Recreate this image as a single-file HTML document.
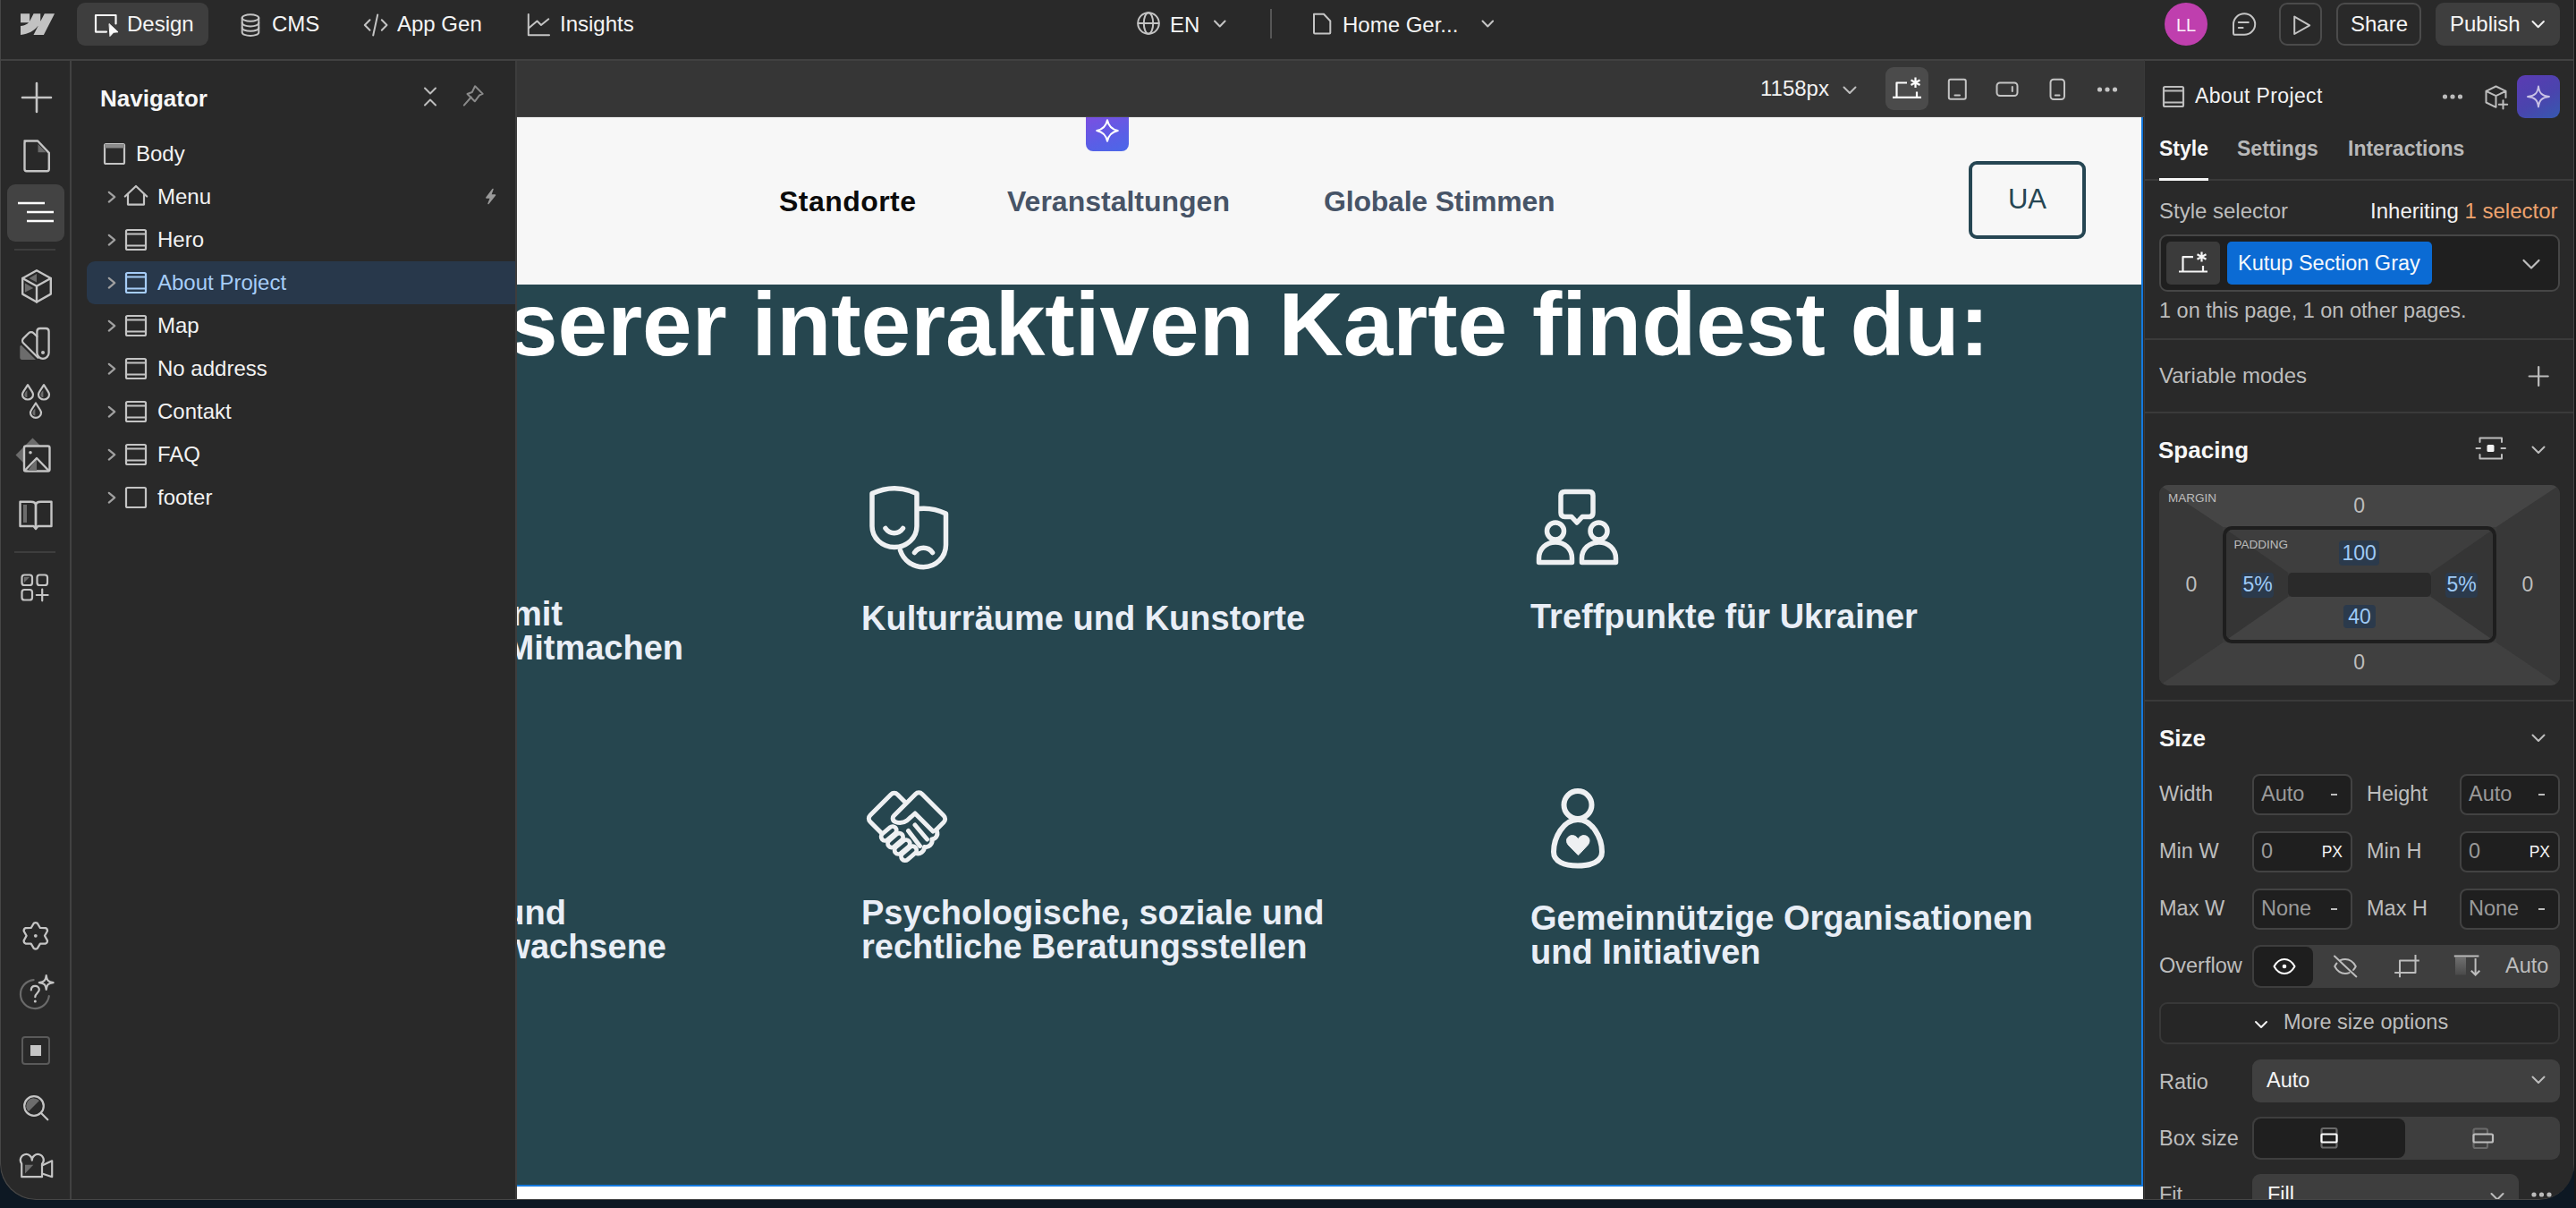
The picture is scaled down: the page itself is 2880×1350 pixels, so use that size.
<!DOCTYPE html>
<html><head><meta charset="utf-8"><style>
html,body{margin:0;padding:0;}
body{width:2880px;height:1350px;overflow:hidden;position:relative;background:#0d1823;font-family:"Liberation Sans", sans-serif;}
.win{position:absolute;left:0;top:0;width:2878px;height:1341px;background:#292929;border-radius:0 0 40px 40px;overflow:hidden;}
.t{position:absolute;white-space:nowrap;line-height:1;}
.r{position:absolute;}
.i{position:absolute;overflow:visible;}
</style></head><body>
<div class="r" style="left:2878px;top:0;width:2px;height:1341px;background:#161616"></div>
<div class="win">
<div class="r" style="left:0px;top:0px;width:2880px;height:66px;background:#292929;"></div><div class="r" style="left:0px;top:66px;width:2880px;height:2px;background:#414141;"></div><svg class="i" style="left:23px;top:15px" width="38" height="24" viewBox="0 0 173 108"><path fill="#c2c2c2" d="M173.2 0L117.9 108.1H66L89.1 63.3H88.1C69 88.1 40.5 104.4 0 108.1V63.9C0 63.9 25.9 62.4 41.2 46.4H0V0H46.3V38.1H47.3L66.2 0H101.2V37.9H102.3L121.9 0H173.2Z"/></svg><div class="r" style="left:86px;top:3px;width:147px;height:48px;background:#3e3e3e;border-radius:9px;"></div><svg class="i" style="left:100px;top:10px;" width="40" height="36" viewBox="100 10 40 36" fill="none" stroke="#f5f5f5" stroke-width="2.2" stroke-linecap="round" stroke-linejoin="round"><path d="M119 35.6H107V17H129.5V26.5"/><path d="M122.3 26.8L132 35.8L127 36.2L123.2 40.3Z" fill="#fafafa" stroke="#fafafa" stroke-width="1"/></svg><div class="t" style="left:142.0px;top:14.7px;font-size:24px;color:#f5f5f5;font-weight:400;">Design</div><svg class="i" style="left:266px;top:12px;" width="28" height="32" viewBox="266 12 28 32" fill="none" stroke="#c4c4c4" stroke-width="2" stroke-linecap="round" stroke-linejoin="round"><ellipse cx="280" cy="20" rx="9.3" ry="3.8"/><path d="M270.7 20V36.2C270.7 38.4 275 40 280 40C285 40 289.3 38.4 289.3 36.2V20"/><path d="M270.7 25.6C270.7 27.8 275 29.4 280 29.4C285 29.4 289.3 27.8 289.3 25.6"/><path d="M270.7 31C270.7 33.2 275 34.8 280 34.8C285 34.8 289.3 33.2 289.3 31"/></svg><div class="t" style="left:304.0px;top:14.7px;font-size:24px;color:#f5f5f5;font-weight:400;">CMS</div><svg class="i" style="left:402px;top:12px;" width="36" height="32" viewBox="402 12 36 32" fill="none" stroke="#c4c4c4" stroke-width="2" stroke-linecap="round" stroke-linejoin="round"><path d="M413.5 22.2L407.8 28L413.5 33.8"/><path d="M422.2 16.5L417.2 39.5"/><path d="M426.8 22.2L432.5 28L426.8 33.8"/></svg><div class="t" style="left:444.0px;top:14.7px;font-size:24px;color:#f5f5f5;font-weight:400;">App Gen</div><svg class="i" style="left:586px;top:12px;" width="32" height="32" viewBox="586 12 32 32" fill="none" stroke="#c4c4c4" stroke-width="2" stroke-linecap="round" stroke-linejoin="round"><path d="M590.8 16V39.3H614"/><path d="M591 31.5L600.5 23.5L605 28L613.3 21.3"/></svg><div class="t" style="left:626.0px;top:14.7px;font-size:24px;color:#f5f5f5;font-weight:400;">Insights</div><svg class="i" style="left:1268px;top:10px;" width="32" height="32" viewBox="1268 10 32 32" fill="none" stroke="#c4c4c4" stroke-width="2" stroke-linecap="round" stroke-linejoin="round"><circle cx="1284" cy="26" r="11.8"/><ellipse cx="1284" cy="26" rx="5.2" ry="11.8"/><path d="M1272.5 26H1295.5"/></svg><div class="t" style="left:1308.0px;top:15.7px;font-size:24px;color:#f5f5f5;font-weight:400;">EN</div><svg class="i" style="left:1354px;top:20px;" width="20" height="14" viewBox="1354 20 20 14" fill="none" stroke="#c4c4c4" stroke-width="2" stroke-linecap="round" stroke-linejoin="round"><path d="M1358 23.5L1363.8 29.5L1369.6 23.5"/></svg><div class="r" style="left:1420px;top:10px;width:2px;height:33px;background:#565656;"></div><svg class="i" style="left:1464px;top:10px;" width="28" height="32" viewBox="1464 10 28 32" fill="none" stroke="#c4c4c4" stroke-width="2" stroke-linecap="round" stroke-linejoin="round"><path d="M1469 15.8H1480L1487.3 23.5V36.6C1487.3 37.2 1486.8 37.6 1486.3 37.6H1470C1469.4 37.6 1469 37.2 1469 36.6Z"/></svg><div class="t" style="left:1501.0px;top:15.7px;font-size:24px;color:#f5f5f5;font-weight:400;">Home Ger...</div><svg class="i" style="left:1654px;top:20px;" width="20" height="14" viewBox="1654 20 20 14" fill="none" stroke="#c4c4c4" stroke-width="2" stroke-linecap="round" stroke-linejoin="round"><path d="M1657.5 23.5L1663.3 29.5L1669.1 23.5"/></svg><div class="r" style="left:2420px;top:3px;width:48px;height:48px;border-radius:50%;background:#bf3fae"></div><div class="t" style="left:1944.0px;width:1000px;text-align:center;top:17.6px;font-size:20px;color:#fbeffa;font-weight:400;letter-spacing:0px;">LL</div><svg class="i" style="left:2492px;top:10px;" width="34" height="34" viewBox="2492 10 34 34" fill="none" stroke="#c4c4c4" stroke-width="2" stroke-linecap="round" stroke-linejoin="round"><path d="M2509.2 15.2C2515.8 15.2 2521.2 20.5 2521.2 27C2521.2 33.5 2515.8 38.8 2509.2 38.8H2498.9C2497.8 38.8 2497 38 2497 36.9V27C2497 20.5 2502.5 15.2 2509.2 15.2Z"/><path d="M2502.8 25H2513.8M2502.8 31.1H2507.6"/></svg><div class="r" style="left:2548px;top:3px;width:48px;height:48px;background:transparent;border:2px solid #4b4b4b;border-radius:9px;box-sizing:border-box;"></div><svg class="i" style="left:2560px;top:14px;" width="28" height="28" viewBox="2560 14 28 28" fill="none" stroke="#c4c4c4" stroke-width="2" stroke-linecap="round" stroke-linejoin="round"><path d="M2565.2 18.6V38L2582.2 28.3Z"/></svg><div class="r" style="left:2612px;top:3px;width:95px;height:48px;background:transparent;border:2px solid #4b4b4b;border-radius:9px;box-sizing:border-box;"></div><div class="t" style="left:2628.0px;top:14.7px;font-size:24px;color:#f5f5f5;font-weight:400;">Share</div><div class="r" style="left:2723px;top:3px;width:139px;height:48px;background:#3e3e3e;border-radius:9px;"></div><div class="t" style="left:2739.0px;top:14.7px;font-size:24px;color:#f5f5f5;font-weight:400;">Publish</div><svg class="i" style="left:2828px;top:20px;" width="20" height="14" viewBox="2828 20 20 14" fill="none" stroke="#f0f0f0" stroke-width="2" stroke-linecap="round" stroke-linejoin="round"><path d="M2831.5 24L2837.7 30.3L2843.9 24"/></svg>
<div class="r" style="left:78px;top:68px;width:2px;height:1272px;background:#414141;"></div><svg class="i" style="left:20px;top:88px;" width="42" height="42" viewBox="20 88 42 42" fill="none" stroke="#c4c4c4" stroke-width="2.6" stroke-linecap="round" stroke-linejoin="round"><path d="M41 93V125M25 109H57"/></svg><svg class="i" style="left:20px;top:150px;" width="42" height="48" viewBox="20 150 42 48" fill="none" stroke="#c4c4c4" stroke-width="2.4" stroke-linecap="round" stroke-linejoin="round"><path d="M27.5 157.5H42.2L54.8 170.8V189C54.8 190.2 53.9 191.2 52.6 191.2H29.7C28.5 191.2 27.5 190.2 27.5 189V159.7C27.5 158.5 28.5 157.5 29.7 157.5Z"/><path d="M42.5 161L51.5 170.3H42.5Z" fill="#6a6a6a" stroke="none"/></svg><div class="r" style="left:8px;top:206px;width:64px;height:64px;background:#434343;border-radius:9px;"></div><svg class="i" style="left:14px;top:216px;stroke-linecap:butt" width="52" height="40" viewBox="14 216 52 40" fill="none" stroke="#ffffff" stroke-width="2.6" stroke-linecap="round" stroke-linejoin="round"><path d="M20 227H50M30 237H60M30 247H60"/></svg><div class="r" style="left:16px;top:278px;width:46px;height:2px;background:#3d3d3d;"></div><svg class="i" style="left:18px;top:296px;" width="46" height="48" viewBox="18 296 46 48" fill="none" stroke="#c4c4c4" stroke-width="2.4" stroke-linecap="round" stroke-linejoin="round"><path d="M32.5 310.9L41 306V315.6Z" fill="#6c6c6c" stroke="none"/><path d="M28 316.5L37.3 322L28 326.5Z" fill="#6c6c6c" stroke="none"/><path d="M41 302.2L56.8 311V328.6L41 337.5L25.2 328.6V311Z"/><path d="M25.2 311L41 319.8L56.8 311M41 319.8V337.5"/></svg><svg class="i" style="left:16px;top:360px;" width="46" height="48" viewBox="16 360 46 48" fill="none" stroke="#c4c4c4" stroke-width="2.3" stroke-linecap="round" stroke-linejoin="round"><path d="M22.3 387.5C22.3 386.2 23.6 385.6 24.5 386.5L40 401.9H24.5C23.3 401.9 22.3 400.9 22.3 399.7Z" fill="#6c6c6c" stroke="none"/><path d="M41.4 394.2V370.5C41.4 368.5 42.9 367 44.9 367H51.1C53.1 367 54.6 368.5 54.6 370.5V394.2A6.6 6.6 0 0 1 41.4 394.2Z"/><path d="M41.4 376L37.5 372.2C36 370.7 33.6 370.7 32.1 372.2L26.2 378.1C24.7 379.6 24.7 382 26.2 383.5L42.5 399.8"/><circle cx="48" cy="393.9" r="2" fill="#c4c4c4" stroke="none"/></svg><svg class="i" style="left:16px;top:424px;" width="50" height="50" viewBox="16 424 50 50" fill="none" stroke="#c4c4c4" stroke-width="2.2" stroke-linecap="round" stroke-linejoin="round"><path d="M30.4 436.3C28.4 437.7 27.4 439.9 27.4 441.5C27.4 443.1 28.8 444.1 30.4 444.1Z" fill="#6c6c6c" stroke="none"/><path d="M31 430.2L26.2 437.7C25.4 439.0 25 440.1 25 441.0C25 444.1 27.7 446.5 31 446.5C34.3 446.5 37 444.1 37 441.0C37 440.1 36.6 439.0 35.8 437.7Z"/><path d="M48.4 436.3C46.4 437.7 45.4 439.9 45.4 441.5C45.4 443.1 46.8 444.1 48.4 444.1Z" fill="#6c6c6c" stroke="none"/><path d="M49 430.2L44.2 437.7C43.4 439.0 43 440.1 43 441.0C43 444.1 45.7 446.5 49 446.5C52.3 446.5 55 444.1 55 441.0C55 440.1 54.6 439.0 53.8 437.7Z"/><path d="M39.4 456.6C37.4 458.0 36.4 460.2 36.4 461.8C36.4 463.40000000000003 37.8 464.40000000000003 39.4 464.40000000000003Z" fill="#6c6c6c" stroke="none"/><path d="M40 450.5L35.2 458.0C34.4 459.3 34 460.40000000000003 34 461.3C34 464.40000000000003 36.7 466.8 40 466.8C43.3 466.8 46 464.40000000000003 46 461.3C46 460.40000000000003 45.6 459.3 44.8 458.0Z"/></svg><svg class="i" style="left:14px;top:484px;" width="48" height="48" viewBox="14 484 48 48" fill="none" stroke="#c4c4c4" stroke-width="2.4" stroke-linecap="round" stroke-linejoin="round"><path d="M36.5 489.5L55.5 508.5L36.5 527.5L17.5 508.5Z" fill="#6c6c6c" stroke="none"/><rect x="27" y="498.5" width="28.5" height="28" rx="2" fill="#292929"/><circle cx="34" cy="505.8" r="1.8" fill="#c4c4c4" stroke="none"/><path d="M41 513V526H31Z" fill="#6c6c6c" stroke="none"/><path d="M27.5 526L41 512L54.5 526"/></svg><svg class="i" style="left:16px;top:554px;" width="48" height="44" viewBox="16 554 48 44" fill="none" stroke="#c4c4c4" stroke-width="2.4" stroke-linecap="round" stroke-linejoin="round"><path d="M22.5 560.8H34.5C38 560.8 40 562.5 40 565V591L37.5 588H22.5Z"/><path d="M57.5 560.8H45.5C42 560.8 40 562.5 40 565V591L42.5 588H57.5Z"/><rect x="26" y="564" width="4" height="20" fill="#6c6c6c" stroke="none"/></svg><div class="r" style="left:16px;top:616px;width:46px;height:2px;background:#3d3d3d;"></div><svg class="i" style="left:18px;top:636px;" width="42" height="42" viewBox="18 636 42 42" fill="none" stroke="#c4c4c4" stroke-width="2.2" stroke-linecap="round" stroke-linejoin="round"><rect x="24.5" y="642.5" width="11.5" height="11.5" rx="2.8"/><rect x="41.5" y="642.5" width="11.5" height="11.5" rx="2.8"/><rect x="24.5" y="659" width="11.5" height="11.5" rx="2.8"/><path d="M47.2 658.5V671.3M40.8 665H53.6"/><path d="M27 645H33L27 651Z" fill="#6c6c6c" stroke="none"/></svg><svg class="i" style="left:20px;top:1026px;" width="40" height="40" viewBox="20 1026 40 40" fill="none" stroke="#c4c4c4" stroke-width="2.3" stroke-linecap="round" stroke-linejoin="round"><path d="M37.82 1031.74Q39.80 1030.40 41.78 1031.74L44.90 1036.97L50.99 1037.06Q53.14 1038.10 52.97 1040.48L50.00 1045.80L52.97 1051.12Q53.14 1053.50 50.99 1054.54L44.90 1054.63L41.78 1059.86Q39.80 1061.20 37.82 1059.86L34.70 1054.63L28.61 1054.54Q26.46 1053.50 26.63 1051.12L29.60 1045.80L26.63 1040.48Q26.46 1038.10 28.61 1037.06L34.70 1036.97Z"/><circle cx="39.8" cy="1045.8" r="1.9" fill="#c4c4c4" stroke="none"/></svg><svg class="i" style="left:18px;top:1084px;" width="48" height="48" viewBox="18 1084 48 48" fill="none" stroke="#c4c4c4" stroke-width="2.2" stroke-linecap="round" stroke-linejoin="round"><path d="M54.8 1113.2A16 16 0 1 1 37.6 1095.1" stroke="#6a6a6a"/><path d="M34.8 1106.5C34.8 1103.5 36.8 1101.8 39.3 1101.8C41.8 1101.8 43.8 1103.5 43.8 1106C43.8 1109.5 39.3 1110 39.3 1114.2"/><circle cx="39.3" cy="1119" r="1.5" fill="#c4c4c4" stroke="none"/><path d="M51.7 1090.2C52.3 1095.5 53.5 1097.3 59.6 1098.1C53.5 1098.9 52.3 1100.7 51.7 1106C51.1 1100.7 49.9 1098.9 43.8 1098.1C49.9 1097.3 51.1 1095.5 51.7 1090.2Z"/></svg><div class="r" style="left:24px;top:1158px;width:32px;height:32px;background:transparent;border:2px solid #5a5a5a;border-radius:4px;box-sizing:border-box;"></div><div class="r" style="left:34px;top:1168px;width:12px;height:12px;background:#c4c4c4;"></div><svg class="i" style="left:20px;top:1218px;" width="40" height="40" viewBox="20 1218 40 40" fill="none" stroke="#c4c4c4" stroke-width="2.2" stroke-linecap="round" stroke-linejoin="round"><circle cx="38" cy="1236" r="10.8"/><path d="M45.8 1243.8L53.3 1251.3"/><path d="M38 1227.5A8.5 8.5 0 0 0 32 1242Z" fill="#6c6c6c" stroke="none"/><path d="M32 1242L44 1230A8.5 8.5 0 0 0 38 1227.5A8.5 8.5 0 0 0 32 1242Z" fill="#6c6c6c" stroke="none"/></svg><svg class="i" style="left:16px;top:1284px;" width="48" height="38" viewBox="16 1284 48 38" fill="none" stroke="#c4c4c4" stroke-width="2.2" stroke-linecap="round" stroke-linejoin="round"><path d="M28 1301.8H37.3L28 1311.5Z" fill="#6c6c6c" stroke="none"/><path d="M24.2 1300.5V1315.2H47V1300.5"/><path d="M24 1300.2A6.5 6.5 0 1 1 35.8 1296.6A6.5 6.5 0 1 1 47.6 1300.2"/><path d="M47 1302.5L58.2 1297.3V1315.2L47 1311.5"/></svg>
<div class="r" style="left:576px;top:68px;width:2px;height:1272px;background:#3d3d3d;"></div><div class="t" style="left:112.0px;top:96.5px;font-size:26px;color:#f7f7f7;font-weight:700;">Navigator</div><svg class="i" style="left:470px;top:94px;" width="22" height="28" viewBox="470 94 22 28" fill="none" stroke="#bdbdbd" stroke-width="2" stroke-linecap="round" stroke-linejoin="round"><path d="M475 98.5L481 104.5L487 98.5M475 117.5L481 111.5L487 117.5"/></svg><svg class="i" style="left:512px;top:92px;" width="32" height="30" viewBox="512 92 32 30" fill="none" stroke="#8a8a8a" stroke-width="2" stroke-linecap="round" stroke-linejoin="round"><path d="M518.8 117.6L526.8 108.5"/><path d="M531.1 96.3L539.7 104.9L536.1 106.4L530.8 113.3L522.5 105L527.8 103Z"/></svg><div class="r" style="left:97px;top:292px;width:479px;height:48px;background:#28384b;border-radius:9px 0 0 9px;"></div><svg class="i" style="left:113px;top:157px;" width="30" height="30" viewBox="113 157 30 30" fill="none" stroke="#c4c4c4" stroke-width="2.2" stroke-linecap="round" stroke-linejoin="round"><rect x="117" y="161" width="22" height="22" rx="1.5"/><rect x="117" y="161" width="22" height="4.5" fill="#8a8a8a" stroke="none"/></svg><div class="t" style="left:152.0px;top:160.0px;font-size:24px;color:#f2f2f2;font-weight:400;">Body</div><svg class="i" style="left:118px;top:211px;" width="14" height="18" viewBox="118 211 14 18" fill="none" stroke="#a0a0a0" stroke-width="2.2" stroke-linecap="round" stroke-linejoin="round"><path d="M121.8 214.8L128.2 220.2L121.8 225.6"/></svg><svg class="i" style="left:136px;top:204px;" width="32" height="30" viewBox="136 204 32 30" fill="none" stroke="#c4c4c4" stroke-width="2.2" stroke-linecap="round" stroke-linejoin="round"><path d="M139.8 219.5L152 208L164.2 219.5"/><path d="M143 216.8V228.6H161V216.8"/></svg><div class="t" style="left:176.0px;top:208.0px;font-size:24px;color:#f2f2f2;font-weight:400;">Menu</div><svg class="i" style="left:118px;top:259px;" width="14" height="18" viewBox="118 259 14 18" fill="none" stroke="#a0a0a0" stroke-width="2.2" stroke-linecap="round" stroke-linejoin="round"><path d="M121.8 262.8L128.2 268.2L121.8 273.6"/></svg><svg class="i" style="left:137px;top:253px;" width="30" height="30" viewBox="137 253 30 30" fill="none" stroke="#c4c4c4" stroke-width="2.2" stroke-linecap="round" stroke-linejoin="round"><rect x="141" y="257" width="22" height="22" rx="1.5"/><path d="M141 261.5H163M141 274.5H163"/></svg><div class="t" style="left:176.0px;top:256.0px;font-size:24px;color:#f2f2f2;font-weight:400;">Hero</div><svg class="i" style="left:118px;top:307px;" width="14" height="18" viewBox="118 307 14 18" fill="none" stroke="#a0a0a0" stroke-width="2.2" stroke-linecap="round" stroke-linejoin="round"><path d="M121.8 310.8L128.2 316.2L121.8 321.6"/></svg><svg class="i" style="left:137px;top:301px;" width="30" height="30" viewBox="137 301 30 30" fill="none" stroke="#a6cdf8" stroke-width="2.2" stroke-linecap="round" stroke-linejoin="round"><rect x="141" y="305" width="22" height="22" rx="1.5"/><path d="M141 309.5H163M141 322.5H163"/></svg><div class="t" style="left:176.0px;top:304.0px;font-size:24px;color:#a6cdf8;font-weight:400;">About Project</div><svg class="i" style="left:118px;top:355px;" width="14" height="18" viewBox="118 355 14 18" fill="none" stroke="#a0a0a0" stroke-width="2.2" stroke-linecap="round" stroke-linejoin="round"><path d="M121.8 358.8L128.2 364.2L121.8 369.6"/></svg><svg class="i" style="left:137px;top:349px;" width="30" height="30" viewBox="137 349 30 30" fill="none" stroke="#c4c4c4" stroke-width="2.2" stroke-linecap="round" stroke-linejoin="round"><rect x="141" y="353" width="22" height="22" rx="1.5"/><path d="M141 357.5H163M141 370.5H163"/></svg><div class="t" style="left:176.0px;top:352.0px;font-size:24px;color:#f2f2f2;font-weight:400;">Map</div><svg class="i" style="left:118px;top:403px;" width="14" height="18" viewBox="118 403 14 18" fill="none" stroke="#a0a0a0" stroke-width="2.2" stroke-linecap="round" stroke-linejoin="round"><path d="M121.8 406.8L128.2 412.2L121.8 417.6"/></svg><svg class="i" style="left:137px;top:397px;" width="30" height="30" viewBox="137 397 30 30" fill="none" stroke="#c4c4c4" stroke-width="2.2" stroke-linecap="round" stroke-linejoin="round"><rect x="141" y="401" width="22" height="22" rx="1.5"/><path d="M141 405.5H163M141 418.5H163"/></svg><div class="t" style="left:176.0px;top:400.0px;font-size:24px;color:#f2f2f2;font-weight:400;">No address</div><svg class="i" style="left:118px;top:451px;" width="14" height="18" viewBox="118 451 14 18" fill="none" stroke="#a0a0a0" stroke-width="2.2" stroke-linecap="round" stroke-linejoin="round"><path d="M121.8 454.8L128.2 460.2L121.8 465.6"/></svg><svg class="i" style="left:137px;top:445px;" width="30" height="30" viewBox="137 445 30 30" fill="none" stroke="#c4c4c4" stroke-width="2.2" stroke-linecap="round" stroke-linejoin="round"><rect x="141" y="449" width="22" height="22" rx="1.5"/><path d="M141 453.5H163M141 466.5H163"/></svg><div class="t" style="left:176.0px;top:448.0px;font-size:24px;color:#f2f2f2;font-weight:400;">Contakt</div><svg class="i" style="left:118px;top:499px;" width="14" height="18" viewBox="118 499 14 18" fill="none" stroke="#a0a0a0" stroke-width="2.2" stroke-linecap="round" stroke-linejoin="round"><path d="M121.8 502.8L128.2 508.2L121.8 513.6"/></svg><svg class="i" style="left:137px;top:493px;" width="30" height="30" viewBox="137 493 30 30" fill="none" stroke="#c4c4c4" stroke-width="2.2" stroke-linecap="round" stroke-linejoin="round"><rect x="141" y="497" width="22" height="22" rx="1.5"/><path d="M141 501.5H163M141 514.5H163"/></svg><div class="t" style="left:176.0px;top:496.0px;font-size:24px;color:#f2f2f2;font-weight:400;">FAQ</div><svg class="i" style="left:118px;top:547px;" width="14" height="18" viewBox="118 547 14 18" fill="none" stroke="#a0a0a0" stroke-width="2.2" stroke-linecap="round" stroke-linejoin="round"><path d="M121.8 550.8L128.2 556.2L121.8 561.6"/></svg><svg class="i" style="left:137px;top:541px;" width="30" height="30" viewBox="137 541 30 30" fill="none" stroke="#c4c4c4" stroke-width="2.2" stroke-linecap="round" stroke-linejoin="round"><rect x="141" y="545" width="22" height="22" rx="1.5"/></svg><div class="t" style="left:176.0px;top:544.0px;font-size:24px;color:#f2f2f2;font-weight:400;">footer</div><svg class="i" style="left:538px;top:208px;" width="20" height="24" viewBox="538 208 20 24" fill="none" stroke="#9a9a9a" stroke-width="1" stroke-linecap="round" stroke-linejoin="round"><path d="M551 211.5L543.8 221H548.6L546 227.5L553.6 218H548.6Z" fill="#9a9a9a" stroke="#9a9a9a" stroke-width="1.4"/></svg>
<div class="r" style="left:578px;top:68px;width:1819px;height:63px;background:#363636;"></div><div class="r" style="left:578px;top:130px;width:1819px;height:1px;background:#464646;"></div><div class="t" style="left:1968.0px;top:86.7px;font-size:24px;color:#f2f2f2;font-weight:400;">1158px</div><svg class="i" style="left:2056px;top:92px;" width="24" height="18" viewBox="2056 92 24 18" fill="none" stroke="#bdbdbd" stroke-width="2" stroke-linecap="round" stroke-linejoin="round"><path d="M2061.5 97.5L2068 104L2074.5 97.5"/></svg><div class="r" style="left:2108px;top:75px;width:48px;height:48px;background:#4b4b4b;border-radius:9px;"></div><svg class="i" style="left:2112px;top:84px;stroke-linecap:butt" width="40" height="30" viewBox="2112 84 40 30" fill="none" stroke="#ffffff" stroke-width="2.2" stroke-linecap="round" stroke-linejoin="round"><path d="M2116 108.8H2148M2120.5 108.8V92.5H2132M2143 102.5V108.8"/><path d="M2141.5 86.5V98M2136.5 89.5L2146.5 95M2146.5 89.5L2136.5 95"/></svg><svg class="i" style="left:2174px;top:84px;" width="28" height="32" viewBox="2174 84 28 32" fill="none" stroke="#c4c4c4" stroke-width="2" stroke-linecap="round" stroke-linejoin="round"><rect x="2178.8" y="88.8" width="19" height="22" rx="2"/><path d="M2185.5 106.5H2191"/></svg><svg class="i" style="left:2228px;top:88px;" width="32" height="24" viewBox="2228 88 32 24" fill="none" stroke="#c4c4c4" stroke-width="2" stroke-linecap="round" stroke-linejoin="round"><rect x="2232.5" y="92.5" width="23" height="14.5" rx="3.5"/><path d="M2249.8 97V102"/></svg><svg class="i" style="left:2288px;top:84px;" width="24" height="32" viewBox="2288 84 24 32" fill="none" stroke="#c4c4c4" stroke-width="2" stroke-linecap="round" stroke-linejoin="round"><rect x="2292.5" y="88.8" width="15.5" height="22.3" rx="3.5"/><path d="M2297.8 106.5H2302.5"/></svg><svg class="i" style="left:2340px;top:94px;" width="32" height="12" viewBox="2340 94 32 12" fill="none" stroke="#c4c4c4" stroke-width="2.6" stroke-linecap="round" stroke-linejoin="round"><circle cx="2347.5" cy="100" r="1.3"/><circle cx="2356" cy="100" r="1.3"/><circle cx="2364.5" cy="100" r="1.3"/></svg><div class="r" style="left:578px;top:131px;width:1818px;height:1209px;overflow:hidden;background:#ffffff"><div class="r" style="left:0px;top:0px;width:1818px;height:187px;background:#f7f7f7;"></div><div class="r" style="left:0px;top:187px;width:1818px;height:1006px;background:#26464f;"></div><div class="r" style="left:0px;top:1193px;width:1818px;height:2px;background:#1479de;"></div><div class="r" style="left:1816px;top:0px;width:2px;height:1195px;background:#1479de;"></div><div class="r" style="left:636px;top:0px;width:48px;height:38px;background:linear-gradient(160deg,#7b4fe1 0%,#5a5ee6 60%,#4a68e8 100%);border-radius:0 0 8px 8px;"></div><svg class="i" style="left:644px;top:-1px;" width="32" height="32" viewBox="1222 130 32 32" fill="none" stroke="#ffffff" stroke-width="2" stroke-linecap="round" stroke-linejoin="round"><path d="M1238 134.2Q1240 144 1249.8 146Q1240 148 1238 157.8Q1236 148 1226.2 146Q1236 144 1238 134.2Z"/></svg><div class="t" style="left:293.0px;top:77.9px;font-size:32px;color:#0b0b0b;font-weight:700;letter-spacing:0.45px;">Standorte</div><div class="t" style="left:548.0px;top:77.9px;font-size:32px;color:#475467;font-weight:700;">Veranstaltungen</div><div class="t" style="left:902.0px;top:77.9px;font-size:32px;color:#475467;font-weight:700;letter-spacing:-0.2px;">Globale Stimmen</div><div class="r" style="left:1623px;top:49px;width:131px;height:87px;background:transparent;border:4px solid #264653;border-radius:9px;box-sizing:border-box;"></div><div class="t" style="left:1188.5px;width:1000px;text-align:center;top:76.3px;font-size:31px;color:#264653;font-weight:400;">UA</div><div class="t" style="right:172.0px;top:180.6px;font-size:100px;color:#ffffff;font-weight:700;">In unserer interaktiven Karte findest du:</div><div class="t" style="right:1767.0px;top:536.2px;font-size:38px;color:#e9eef6;font-weight:700;">Orte zum Austausch mit</div><div class="t" style="right:1632.0px;top:574.1px;font-size:38px;color:#e9eef6;font-weight:700;">Gleichgesinnten und Mitmachen</div><div class="t" style="left:385.0px;top:540.8px;font-size:38px;color:#e9eef6;font-weight:700;">Kulturräume und Kunstorte</div><div class="t" style="left:1133.0px;top:539.0px;font-size:38px;color:#e9eef6;font-weight:700;">Treffpunkte für Ukrainer</div><div class="t" style="right:1763.0px;top:869.8px;font-size:38px;color:#e9eef6;font-weight:700;">Angebote für Kinder und</div><div class="t" style="right:1651.0px;top:907.8px;font-size:38px;color:#e9eef6;font-weight:700;">Erwachsene</div><div class="t" style="left:385.0px;top:870.1px;font-size:38px;color:#e9eef6;font-weight:700;line-height:38px;">Psychologische, soziale und<br>rechtliche Beratungsstellen</div><div class="t" style="left:1133.0px;top:876.2px;font-size:38px;color:#e9eef6;font-weight:700;line-height:38px;">Gemeinnützige Organisationen<br>und Initiativen</div><svg class="i" style="left:382px;top:404px;" width="110" height="110" viewBox="960 535 110 110" fill="none" stroke="#eef0f2" stroke-width="5.5" stroke-linecap="round" stroke-linejoin="round"><path d="M975 551.5C991 544 1009 544 1025 551.5V588C1025 601 1014 611.5 1000 611.5C986 611.5 975 601 975 588Z"/><path d="M1027.5 568.5C1038 567.5 1048 569.5 1057.5 574V609C1057.5 622.5 1046.5 633.7 1032.5 633.7C1020 633.7 1010 626 1006.5 615"/><path d="M990 590.5C995 597.5 1004.5 597.5 1009.5 590.5"/><path d="M1022.5 617.5C1027.5 610.5 1037.5 610.5 1042.5 617.5"/></svg><svg class="i" style="left:1127px;top:409px;" width="115" height="100" viewBox="1705 540 115 100" fill="none" stroke="#eef0f2" stroke-width="5.5" stroke-linecap="round" stroke-linejoin="round"><path d="M1749.5 549.5H1776.5C1779.5 549.5 1781 551 1781 554V573C1781 576 1779.5 577.5 1776.5 577.5H1769L1763 584L1757 577.5H1749.5C1746.5 577.5 1745 576 1745 573V554C1745 551 1746.5 549.5 1749.5 549.5Z"/><circle cx="1739" cy="593.5" r="9.5"/><circle cx="1787.5" cy="593.5" r="9.5"/><path d="M1720.5 628.5V624C1720.5 613.5 1728.5 606 1739 606C1749.5 606 1757.5 613.5 1757.5 624V628.5Z"/><path d="M1768.5 628.5V624C1768.5 613.5 1777 606 1787.5 606C1798 606 1806.5 613.5 1806.5 624V628.5Z"/></svg><svg class="i" style="left:377px;top:744px;" width="115" height="100" viewBox="955 875 115 100" fill="none" stroke="#eef0f2" stroke-width="5" stroke-linecap="round" stroke-linejoin="round"><g transform="translate(0.5 2.5)"><path d="M986 929.5L972.5 916C970.3 913.8 970.3 910.7 972.5 908.5L995.5 885.5C997.7 883.3 1000.8 883.3 1003 885.5L1011.5 894"/><path d="M1046 925L1054.5 916.5C1056.7 914.3 1056.7 911.2 1054.5 909L1030.5 885C1028.3 882.8 1025.2 882.8 1023 885L999 909C996.8 911.2 997.5 914.8 1000.5 916C1005 917.8 1010 917 1013.5 914.5L1022.5 906.5L1042.5 926.5"/><path d="M1022.5 919.5L1036 935.5M1015 926L1028 943"/><path d="M1046 925C1049 929 1047 934.5 1041.5 935.5C1042.5 940.5 1038 945 1033 944C1033 949 1028 952.5 1023.5 951"/><path d="M989.0 932.6L997.4000000000001 925.4" stroke="#eef0f2" stroke-width="13.5"/><path d="M996.4 940.2L1004.8000000000001 933.0" stroke="#eef0f2" stroke-width="13.5"/><path d="M1004.0 947.6L1012.4000000000001 940.4" stroke="#eef0f2" stroke-width="13.5"/><path d="M1011.4 954.8000000000001L1019.8000000000001 947.6" stroke="#eef0f2" stroke-width="13.5"/><path d="M989.0 932.6L997.4000000000001 925.4" stroke="#26464f" stroke-width="4"/><path d="M996.4 940.2L1004.8000000000001 933.0" stroke="#26464f" stroke-width="4"/><path d="M1004.0 947.6L1012.4000000000001 940.4" stroke="#26464f" stroke-width="4"/><path d="M1011.4 954.8000000000001L1019.8000000000001 947.6" stroke="#26464f" stroke-width="4"/></g></svg><svg class="i" style="left:1147px;top:744px;" width="80" height="105" viewBox="1725 875 80 105" fill="none" stroke="#eef0f2" stroke-width="6" stroke-linecap="round" stroke-linejoin="round"><circle cx="1764" cy="899.5" r="15.5"/><path d="M1764 916C1748 916 1737 936 1737 952C1737 963 1749 967.5 1764 967.5C1779 967.5 1791 963 1791 952C1791 936 1780 916 1764 916Z"/><path d="M1764.3 955.5L1754 945C1750.5 941.5 1750.8 936.5 1754.5 934.5C1758 932.5 1762 934 1764.3 937.5C1766.6 934 1770.6 932.5 1774.1 934.5C1777.8 936.5 1778.1 941.5 1774.6 945Z" fill="#eef0f2" stroke-width="1"/></svg></div>
<div class="r" style="left:2397px;top:67px;width:1px;height:1273px;background:#3a3a3a;"></div><div class="r" style="left:2877px;top:0px;width:1px;height:1341px;background:#434343;"></div><svg class="i" style="left:2414px;top:92px;" width="32" height="32" viewBox="2414 92 32 32" fill="none" stroke="#bdbdbd" stroke-width="2.2" stroke-linecap="round" stroke-linejoin="round"><rect x="2419" y="97" width="22" height="22" rx="1.5"/><path d="M2419 101.5H2441M2419 114.5H2441"/></svg><div class="t" style="left:2454.0px;top:96.3px;font-size:23px;color:#f2f2f2;font-weight:400;letter-spacing:0.35px;">About Project</div><svg class="i" style="left:2726px;top:100px;" width="32" height="16" viewBox="2726 100 32 16" fill="none" stroke="#bdbdbd" stroke-width="2.8" stroke-linecap="round" stroke-linejoin="round"><circle cx="2733.5" cy="108" r="1.2"/><circle cx="2742" cy="108" r="1.2"/><circle cx="2750.5" cy="108" r="1.2"/></svg><svg class="i" style="left:2774px;top:90px;" width="36" height="36" viewBox="2774 90 36 36" fill="none" stroke="#bdbdbd" stroke-width="2" stroke-linecap="round" stroke-linejoin="round"><path d="M2790.5 96.5L2801.5 101.8V109M2790.5 96.5L2779.5 101.8V114.5L2790.5 119.8M2779.5 101.8L2790.5 107.2L2801.5 101.8M2790.5 107.2V119.8"/><path d="M2798.5 112.2V121.5M2793.8 116.8H2803.2"/></svg><div class="r" style="left:2814px;top:84px;width:48px;height:48px;background:linear-gradient(150deg,#5b3bb3 0%,#4a44ad 55%,#3659b0 100%);border-radius:9px;"></div><svg class="i" style="left:2822px;top:92px;" width="32" height="32" viewBox="2822 92 32 32" fill="none" stroke="#c9c2e6" stroke-width="1.9" stroke-linecap="round" stroke-linejoin="round"><path d="M2838 96.5C2839 104.2 2841.8 107 2850 108C2841.8 109 2839 111.8 2838 119.5C2837 111.8 2834.2 109 2826 108C2834.2 107 2837 104.2 2838 96.5Z"/></svg><div class="t" style="left:2414.0px;top:155.3px;font-size:23px;color:#f7f7f7;font-weight:700;">Style</div><div class="t" style="left:2501.0px;top:155.3px;font-size:23px;color:#b8b8b8;font-weight:700;">Settings</div><div class="t" style="left:2625.0px;top:155.3px;font-size:23px;color:#b8b8b8;font-weight:700;">Interactions</div><div class="r" style="left:2398px;top:200px;width:479px;height:2px;background:#3a3a3a;"></div><div class="r" style="left:2414px;top:199px;width:55px;height:3px;background:#f5f5f5;"></div><div class="t" style="left:2414.0px;top:224.0px;font-size:24px;color:#bdbdbd;font-weight:400;">Style selector</div><div class="t" style="right:18.5px;top:224.0px;font-size:24px;color:#f2f2f2;font-weight:400;">Inheriting <span style="color:#eea36e">1 selector</span></div><div class="r" style="left:2414px;top:262px;width:448px;height:64px;background:#1f1f1f;border:2px solid #464646;border-radius:9px;box-sizing:border-box;"></div><div class="r" style="left:2422px;top:270px;width:60px;height:48px;background:#3b3b3b;border-radius:5px;"></div><svg class="i" style="left:2430px;top:274px;stroke-linecap:butt" width="46" height="40" viewBox="2430 274 46 40" fill="none" stroke="#f5f5f5" stroke-width="2.2" stroke-linecap="round" stroke-linejoin="round"><path d="M2436 303.5H2468M2440.5 303.5V287.2H2452M2463 297V303.5"/><path d="M2461.5 281.5V292.5M2456.5 284.3L2466.5 289.7M2466.5 284.3L2456.5 289.7"/></svg><div class="r" style="left:2490px;top:270px;width:229px;height:48px;background:#0b6bd4;border-radius:5px;"></div><div class="t" style="left:2502.0px;top:283.1px;font-size:23.5px;color:#f5f8fc;font-weight:400;">Kutup Section Gray</div><svg class="i" style="left:2816px;top:286px;" width="28" height="20" viewBox="2816 286 28 20" fill="none" stroke="#bdbdbd" stroke-width="2.2" stroke-linecap="round" stroke-linejoin="round"><path d="M2821.5 291L2830 299.5L2838.5 291"/></svg><div class="t" style="left:2414.0px;top:335.5px;font-size:23.5px;color:#bdbdbd;font-weight:400;">1 on this page, 1 on other pages.</div><div class="r" style="left:2398px;top:378px;width:479px;height:2px;background:#3a3a3a;"></div><div class="t" style="left:2414.0px;top:407.9px;font-size:24px;color:#bdbdbd;font-weight:400;">Variable modes</div><svg class="i" style="left:2822px;top:405px;" width="32" height="32" viewBox="2822 405 32 32" fill="none" stroke="#bdbdbd" stroke-width="2.2" stroke-linecap="round" stroke-linejoin="round"><path d="M2838.2 410V431M2827.7 420.5H2848.7"/></svg><div class="r" style="left:2398px;top:460px;width:479px;height:2px;background:#3a3a3a;"></div><div class="t" style="left:2413.0px;top:490.2px;font-size:26px;color:#f7f7f7;font-weight:700;">Spacing</div><svg class="i" style="left:2764px;top:484px;" width="38" height="34" viewBox="2764 484 38 34" fill="none" stroke="#bdbdbd" stroke-width="2" stroke-linecap="round" stroke-linejoin="round"><path d="M2772.5 494V489.5H2797V494M2772.5 508V512.5H2797V508"/><path d="M2768.5 501H2773M2796.5 501H2801"/><rect x="2780.5" y="497" width="8" height="8" rx="1.5" fill="#f2f2f2" stroke="none"/></svg><svg class="i" style="left:2826px;top:494px;" width="24" height="18" viewBox="2826 494 24 18" fill="none" stroke="#bdbdbd" stroke-width="2" stroke-linecap="round" stroke-linejoin="round"><path d="M2831.5 499.5L2838 506L2844.5 499.5"/></svg><svg class="i" style="left:2414px;top:542px" width="448" height="224" viewBox="0 0 448 224"><defs><clipPath id="mc"><rect x="0" y="0" width="448" height="224" rx="10"/></clipPath></defs><g clip-path="url(#mc)"><rect x="0" y="0" width="448" height="224" fill="#3b3b3b"/><path d="M0 0H448L377 47H71Z" fill="#454545"/><path d="M0 224H448L377 176H71Z" fill="#404040"/><path d="M0 0L71 47V176L0 224Z" fill="#383838"/><path d="M448 0L377 47V176L448 224Z" fill="#383838"/></g></svg><div class="r" style="left:2485px;top:588px;width:306px;height:131px;background:#1e1e1e;border-radius:10px;"></div><svg class="i" style="left:2489px;top:592px" width="298" height="123" viewBox="0 0 298 123"><defs><clipPath id="pc"><rect x="0" y="0" width="298" height="123" rx="7"/></clipPath></defs><g clip-path="url(#pc)"><rect x="0" y="0" width="298" height="123" fill="#3a3a3a"/><path d="M0 0H298L229 48H69Z" fill="#3e3e3e"/><path d="M0 123H298L229 75H69Z" fill="#434343"/><path d="M0 0L69 48V75L0 123Z" fill="#353535"/><path d="M298 0L229 48V75L298 123Z" fill="#353535"/></g></svg><div class="r" style="left:2558px;top:640px;width:160px;height:27px;background:#2a2a2a;border-radius:5px;"></div><div class="t" style="left:2424.0px;top:550.0px;font-size:13.5px;color:#bdbdbd;font-weight:400;">MARGIN</div><div class="t" style="left:2497.5px;top:601.6px;font-size:13.5px;color:#bdbdbd;font-weight:400;">PADDING</div><div class="t" style="left:2137.6px;width:1000px;text-align:center;top:553.5px;font-size:23px;color:#bdbdbd;font-weight:400;">0</div><div class="t" style="left:2137.6px;width:1000px;text-align:center;top:729.0px;font-size:23px;color:#bdbdbd;font-weight:400;">0</div><div class="t" style="left:1950.0px;width:1000px;text-align:center;top:641.5px;font-size:23px;color:#bdbdbd;font-weight:400;">0</div><div class="t" style="left:2326.0px;width:1000px;text-align:center;top:641.5px;font-size:23px;color:#bdbdbd;font-weight:400;">0</div><div class="r" style="left:2615px;top:604px;width:45px;height:28px;background:#2b3a4c;border-radius:4px;"></div><div class="t" style="left:2137.6px;width:1000px;text-align:center;top:607.0px;font-size:23px;color:#9fcaf6;font-weight:400;">100</div><div class="r" style="left:2506px;top:640px;width:36px;height:28px;background:#2b3a4c;border-radius:4px;"></div><div class="t" style="left:2024.0px;width:1000px;text-align:center;top:642.0px;font-size:23px;color:#9fcaf6;font-weight:400;">5%</div><div class="r" style="left:2734px;top:640px;width:36px;height:28px;background:#2b3a4c;border-radius:4px;"></div><div class="t" style="left:2252.0px;width:1000px;text-align:center;top:642.0px;font-size:23px;color:#9fcaf6;font-weight:400;">5%</div><div class="r" style="left:2620px;top:676px;width:36px;height:26px;background:#2b3a4c;border-radius:4px;"></div><div class="t" style="left:2138.0px;width:1000px;text-align:center;top:677.5px;font-size:23px;color:#9fcaf6;font-weight:400;">40</div><div class="r" style="left:2398px;top:782px;width:479px;height:2px;background:#3a3a3a;"></div><div class="t" style="left:2414.0px;top:812.2px;font-size:26px;color:#f7f7f7;font-weight:700;">Size</div><svg class="i" style="left:2826px;top:816px;" width="24" height="18" viewBox="2826 816 24 18" fill="none" stroke="#bdbdbd" stroke-width="2" stroke-linecap="round" stroke-linejoin="round"><path d="M2831.5 821.5L2838 828L2844.5 821.5"/></svg><div class="t" style="left:2414.0px;top:876.1px;font-size:23.5px;color:#bdbdbd;font-weight:400;">Width</div><div class="t" style="left:2646.0px;top:876.1px;font-size:23.5px;color:#bdbdbd;font-weight:400;">Height</div><div class="r" style="left:2518px;top:865px;width:112px;height:46px;background:#1f1f1f;border:2px solid #424242;border-radius:8px;box-sizing:border-box;"></div><div class="r" style="left:2750px;top:865px;width:112px;height:46px;background:#1f1f1f;border:2px solid #424242;border-radius:8px;box-sizing:border-box;"></div><div class="t" style="left:2528.0px;top:876.1px;font-size:23.5px;color:#9a9a9a;font-weight:400;">Auto</div><div class="t" style="left:2760.0px;top:876.1px;font-size:23.5px;color:#9a9a9a;font-weight:400;">Auto</div><div class="r" style="left:2606px;top:887px;width:7px;height:2px;background:#bdbdbd;"></div><div class="r" style="left:2838px;top:887px;width:7px;height:2px;background:#bdbdbd;"></div><div class="t" style="left:2414.0px;top:940.1px;font-size:23.5px;color:#bdbdbd;font-weight:400;">Min W</div><div class="t" style="left:2646.0px;top:940.1px;font-size:23.5px;color:#bdbdbd;font-weight:400;">Min H</div><div class="r" style="left:2518px;top:929px;width:112px;height:46px;background:#1f1f1f;border:2px solid #424242;border-radius:8px;box-sizing:border-box;"></div><div class="r" style="left:2750px;top:929px;width:112px;height:46px;background:#1f1f1f;border:2px solid #424242;border-radius:8px;box-sizing:border-box;"></div><div class="t" style="left:2528.0px;top:940.1px;font-size:23.5px;color:#9a9a9a;font-weight:400;">0</div><div class="t" style="left:2760.0px;top:940.1px;font-size:23.5px;color:#9a9a9a;font-weight:400;">0</div><div class="t" style="right:259.0px;top:943.7px;font-size:17.5px;color:#f5f5f5;font-weight:400;">PX</div><div class="t" style="right:27.0px;top:943.7px;font-size:17.5px;color:#f5f5f5;font-weight:400;">PX</div><div class="t" style="left:2414.0px;top:1004.1px;font-size:23.5px;color:#bdbdbd;font-weight:400;">Max W</div><div class="t" style="left:2646.0px;top:1004.1px;font-size:23.5px;color:#bdbdbd;font-weight:400;">Max H</div><div class="r" style="left:2518px;top:993px;width:112px;height:46px;background:#1f1f1f;border:2px solid #424242;border-radius:8px;box-sizing:border-box;"></div><div class="r" style="left:2750px;top:993px;width:112px;height:46px;background:#1f1f1f;border:2px solid #424242;border-radius:8px;box-sizing:border-box;"></div><div class="t" style="left:2528.0px;top:1004.1px;font-size:23.5px;color:#9a9a9a;font-weight:400;">None</div><div class="t" style="left:2760.0px;top:1004.1px;font-size:23.5px;color:#9a9a9a;font-weight:400;">None</div><div class="r" style="left:2606px;top:1015px;width:7px;height:2px;background:#bdbdbd;"></div><div class="r" style="left:2838px;top:1015px;width:7px;height:2px;background:#bdbdbd;"></div><div class="t" style="left:2414.0px;top:1067.7px;font-size:23.5px;color:#bdbdbd;font-weight:400;">Overflow</div><div class="r" style="left:2518px;top:1056px;width:344px;height:48px;background:#3e3e3e;border-radius:9px;"></div><div class="r" style="left:2520px;top:1058px;width:66px;height:44px;background:#1e1e1e;border-radius:8px;"></div><svg class="i" style="left:2538px;top:1068px;" width="32" height="24" viewBox="2538 1068 32 24" fill="none" stroke="#ffffff" stroke-width="2" stroke-linecap="round" stroke-linejoin="round"><path d="M2542.5 1080C2545.5 1074.5 2549.5 1072 2554 1072C2558.5 1072 2562.5 1074.5 2565.5 1080C2562.5 1085.5 2558.5 1088 2554 1088C2549.5 1088 2545.5 1085.5 2542.5 1080Z"/><circle cx="2554" cy="1080" r="2.3" fill="#fff" stroke="none"/></svg><svg class="i" style="left:2606px;top:1064px;" width="32" height="32" viewBox="2606 1064 32 32" fill="none" stroke="#bdbdbd" stroke-width="2" stroke-linecap="round" stroke-linejoin="round"><path d="M2612.5 1076.5C2611.5 1077.6 2610.8 1078.8 2610.2 1080C2613.2 1085.5 2617.4 1088 2622 1088C2623.6 1088 2625.1 1087.7 2626.5 1087.1M2616.5 1073.2C2618.2 1072.4 2620 1072 2622 1072C2626.6 1072 2630.8 1074.5 2633.8 1080C2633 1081.5 2632.1 1082.8 2631.1 1083.9"/><path d="M2610 1068.5L2634.4 1091.4"/></svg><svg class="i" style="left:2672px;top:1062px;stroke-linecap:butt" width="40" height="36" viewBox="2672 1062 40 36" fill="none" stroke="#bdbdbd" stroke-width="2" stroke-linecap="round" stroke-linejoin="round"><path d="M2683 1092.3V1073.5H2704.8M2700.5 1067V1087H2677.2"/></svg><svg class="i" style="left:2740px;top:1064px" width="36" height="32" viewBox="2740 1064 36 32"><defs><linearGradient id="sg" x1="0" y1="0" x2="0" y2="1"><stop offset="0" stop-color="#6f6f6f"/><stop offset="1" stop-color="#4a4a4a"/></linearGradient></defs><rect x="2745" y="1070" width="12" height="19.5" fill="url(#sg)"/><path d="M2743.8 1068.5H2771.4M2767.6 1071V1089M2762.8 1084.7L2767.6 1089.5L2772.3 1084.7" fill="none" stroke="#bdbdbd" stroke-width="2" stroke-linecap="butt"/></svg><div class="t" style="left:2801.0px;top:1067.7px;font-size:23.5px;color:#bdbdbd;font-weight:400;">Auto</div><div class="r" style="left:2414px;top:1120px;width:448px;height:47px;background:#262626;border:2px solid #383838;border-radius:9px;box-sizing:border-box;"></div><svg class="i" style="left:2516px;top:1136px;" width="24" height="20" viewBox="2516 1136 24 20" fill="none" stroke="#f2f2f2" stroke-width="2" stroke-linecap="round" stroke-linejoin="round"><path d="M2522 1142L2528 1148L2534 1142"/></svg><div class="t" style="left:2553.0px;top:1131.4px;font-size:23.5px;color:#bdbdbd;font-weight:400;">More size options</div><div class="t" style="left:2414.0px;top:1198.0px;font-size:23.5px;color:#bdbdbd;font-weight:400;">Ratio</div><div class="r" style="left:2518px;top:1184px;width:344px;height:48px;background:#404040;border-radius:9px;"></div><div class="t" style="left:2534.0px;top:1195.5px;font-size:23.5px;color:#f5f5f5;font-weight:400;">Auto</div><svg class="i" style="left:2826px;top:1198px;" width="24" height="20" viewBox="2826 1198 24 20" fill="none" stroke="#bdbdbd" stroke-width="2" stroke-linecap="round" stroke-linejoin="round"><path d="M2831.5 1203.5L2838 1210L2844.5 1203.5"/></svg><div class="t" style="left:2414.0px;top:1261.1px;font-size:23.5px;color:#bdbdbd;font-weight:400;">Box size</div><div class="r" style="left:2518px;top:1248px;width:344px;height:48px;background:#3e3e3e;border-radius:9px;"></div><div class="r" style="left:2520px;top:1250px;width:169px;height:44px;background:#1f1f1f;border-radius:8px;"></div><svg class="i" style="left:2590px;top:1256px;" width="28" height="36" viewBox="2590 1256 28 36" fill="none" stroke="#ffffff" stroke-width="2.2" stroke-linecap="round" stroke-linejoin="round"><rect x="2595.5" y="1261" width="17" height="21.5" rx="2" stroke="#6a6a6a"/><rect x="2595.5" y="1267.5" width="17" height="9" rx="1" fill="#1f1f1f"/></svg><svg class="i" style="left:2760px;top:1256px;" width="36" height="36" viewBox="2760 1256 36 36" fill="none" stroke="#bdbdbd" stroke-width="2.2" stroke-linecap="round" stroke-linejoin="round"><rect x="2765.5" y="1261.5" width="15.5" height="21.5" rx="2" stroke="#6a6a6a"/><rect x="2765.5" y="1267.5" width="21.5" height="9" rx="1.5" fill="#3e3e3e"/></svg><div class="t" style="left:2414.0px;top:1324.1px;font-size:23.5px;color:#bdbdbd;font-weight:400;">Fit</div><div class="r" style="left:2518px;top:1312px;width:298px;height:48px;background:#3e3e3e;border-radius:9px;"></div><div class="t" style="left:2535.0px;top:1324.1px;font-size:23.5px;color:#f5f5f5;font-weight:400;">Fill</div><svg class="i" style="left:2780px;top:1328px;" width="24" height="20" viewBox="2780 1328 24 20" fill="none" stroke="#bdbdbd" stroke-width="2" stroke-linecap="round" stroke-linejoin="round"><path d="M2785.5 1334L2792 1340.5L2798.5 1334"/></svg><svg class="i" style="left:2826px;top:1326px;" width="40" height="14" viewBox="2826 1326 40 14" fill="none" stroke="#bdbdbd" stroke-width="2.8" stroke-linecap="round" stroke-linejoin="round"><circle cx="2833" cy="1335" r="1.2"/><circle cx="2841.5" cy="1335" r="1.2"/><circle cx="2850" cy="1335" r="1.2"/></svg>
<div class="r" style="left:0;top:0;width:2878px;height:1341px;border-radius:0 0 40px 40px;box-shadow:inset 1px -1px 0 #464646;pointer-events:none"></div>
</div>
</body></html>
